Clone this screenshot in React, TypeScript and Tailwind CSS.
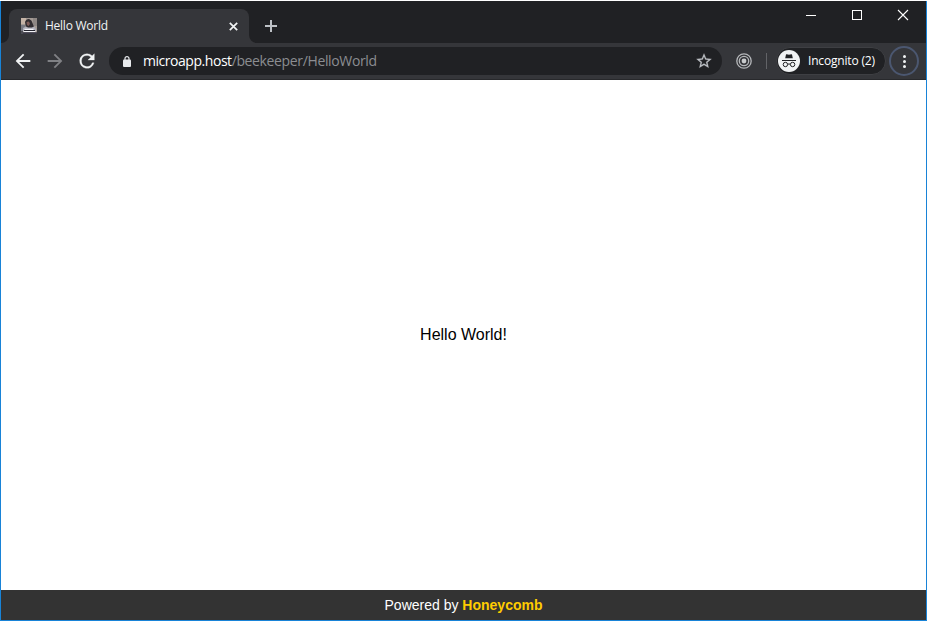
import React from 'react';

const ui = "font-['Open_Sans','Noto_Sans',sans-serif]";

function Favicon() {
  return (
    <svg className="h-4 w-4 shrink-0" viewBox="0 0 16 16">
      <rect width="16" height="16" fill="#a39a94" />
      <rect width="5" height="6" fill="#c4b3a6" />
      <rect y="7" width="4" height="6" fill="#777982" />
      <rect x="12" width="4" height="8" fill="#8e8784" />
      <path d="M4 4q1-3 4-3 3 1 3.500 4l1.500 4-2 1H5z" fill="#302c30" />
      <path d="M5.500 4l2.500-.5L9 6 7.500 8 6 7z" fill="#7d5c58" />
      <path d="M2 10l3-1.500 2 1h4l2-1 2 2.500v2H2z" fill="#b0b0ba" />
      <rect x="3.500" y="10.800" width="9" height="1.200" fill="#f4f4f8" />
      <rect x="3" y="12" width="11" height="1" fill="#24242d" />
      <rect x="2.500" y="13" width="12" height="1.200" fill="#f4f4f8" />
      <rect x="1" y="14.200" width="15" height="1.800" fill="#3b3a46" />
      <rect y="13" width="2" height="3" fill="#4c4c54" />
    </svg>
  );
}

function TabStrip() {
  return (
    <div className="flex h-[42px] shrink-0 items-end bg-[#202124]">
      <svg className="h-2 w-2 shrink-0" viewBox="0 0 8 8">
        <path d="M8 0v8H0A8 8 0 0 0 8 0z" fill="#35363a" />
      </svg>
      <div className="flex h-[34px] w-[240px] shrink-0 items-center rounded-t-lg bg-[#35363a] pl-3">
        <Favicon />
        <span className={`${ui} ml-2 w-[183.500px] text-[12px] leading-4 font-medium tracking-[-0.25px] whitespace-nowrap text-[#f1f3f4]`}>
          Hello World
        </span>
        <svg className="h-[9px] w-[9px] shrink-0" viewBox="0 0 9 9" stroke="#f1f3f4" strokeWidth="1.7">
          <path d="M.8.8l7.400 7.400M8.200.8L.8 8.200" />
        </svg>
      </div>
      <svg className="h-2 w-2 shrink-0" viewBox="0 0 8 8">
        <path d="M0 0v8h8A8 8 0 0 1 0 0z" fill="#35363a" />
      </svg>
      <svg className="mb-[11px] ml-2 h-3 w-3 shrink-0" viewBox="0 0 12 12" fill="#bdc1c6">
        <path d="M5 0h2v5h5v2H7v5H5V7H0V5h5z" />
      </svg>
      <div className="ml-auto flex h-full items-start">
        <svg className="h-[29px] w-[46px]" viewBox="0 0 46 29">
          <path d="M18 14.500h10" stroke="#fff" />
        </svg>
        <svg className="h-[29px] w-[46px]" viewBox="0 0 46 29">
          <rect x="18.500" y="9.500" width="9" height="9" fill="none" stroke="#fff" />
        </svg>
        <svg className="h-[29px] w-[46px]" viewBox="0 0 46 29">
          <path d="M18 9l10 10M28 9L18 19" stroke="#fff" strokeWidth="1.1" />
        </svg>
      </div>
    </div>
  );
}

function Toolbar() {
  return (
    <div className="flex h-[37px] shrink-0 items-center border-b border-[#28292c] bg-[#35363a] pr-[7px] pl-[11px]">
      <svg className="h-[22px] w-[22px] shrink-0" viewBox="0 0 24 24" fill="#f1f3f4">
        <path d="M20 10.900H7.830l5.590-5.490L12 4l-8 8 8 8 1.410-1.410L7.830 13.100H20z" />
      </svg>
      <svg className="ml-[10px] h-[22px] w-[22px] shrink-0" viewBox="0 0 24 24" fill="#808185">
        <path d="M4 10.900h12.170l-5.590-5.490L12 4l8 8-8 8-1.410-1.410 5.580-5.490H4z" />
      </svg>
      <svg className="ml-[10px] h-[22px] w-[22px] shrink-0" viewBox="0 0 24 24" fill="#f1f3f4" stroke="#f1f3f4" strokeWidth=".3">
        <path d="M17.650 6.350A7.958 7.958 0 0 0 12 4a8 8 0 1 0 7.730 10h-2.080A6 6 0 1 1 12 6c1.660 0 3.140.69 4.220 1.780L13 11h7V4z" />
      </svg>

      <div className="ml-[11px] flex h-7 w-[613px] shrink-0 items-center rounded-full bg-[#202124] pl-[14px]">
        <svg className="h-[11px] w-2 shrink-0" viewBox="0 0 8 11">
          <path d="M2 5V2.600a2 2 0 0 1 4 0V5" fill="none" stroke="#e8eaed" strokeWidth="1.2" />
          <rect y="3.500" width="8" height="7.500" rx="1" fill="#e8eaed" />
        </svg>
        <span className={`${ui} ml-3 w-[552px] text-[14px] leading-5 whitespace-nowrap text-[#8b8d91]`}>
          <span className="font-medium tracking-[-0.46px] text-white">microapp.host</span>
          <span className="tracking-[-0.36px]">/beekeeper/HelloWorld</span>
        </span>
        <svg className="h-[18px] w-[18px] shrink-0" viewBox="0 0 24 24" fill="#bdc1c6" stroke="#bdc1c6" strokeWidth=".3">
          <path d="M22 9.240l-7.190-.62L12 2 9.190 8.630 2 9.240l5.460 4.730L5.820 21 12 17.270 18.180 21l-1.630-7.030zM12 15.400l-3.760 2.270 1-4.280-3.320-2.880 4.380-.38L12 6.100l1.710 4.040 4.380.38-3.320 2.880 1 4.280z" />
        </svg>
      </div>

      <svg className="ml-[14px] h-4 w-4 shrink-0" viewBox="0 0 16 16" fill="none" stroke="#b5b7ba" strokeWidth="1.3">
        <circle cx="8" cy="8" r="7.2" />
        <circle cx="8" cy="8" r="4.7" />
        <circle cx="8" cy="8" r="2.4" fill="#c8cacc" stroke="none" />
      </svg>
      <div className="ml-[14px] h-4 w-px shrink-0 bg-[#626367]" />
      <div className="ml-[9px] flex h-7 w-[110px] shrink-0 items-center rounded-full border border-[#3e3f43] bg-[#202124] pl-px">
        <svg className="h-[22px] w-[22px] shrink-0" viewBox="0 0 22 22">
          <circle cx="11" cy="11" r="11" fill="#f1f3f4" />
          <path d="M7.200 8.300L8 4.600Q8.200 4 8.800 4.200L11 4.700l2.200-.5q.6-.2.8.4l.8 3.700z" fill="#202124" />
          <path d="M4 10.500h14" stroke="#202124" strokeWidth="1" />
          <g fill="none" stroke="#202124" strokeWidth="1">
            <circle cx="7.400" cy="14.500" r="2.200" />
            <circle cx="14.600" cy="14.500" r="2.200" />
            <path d="M9.700 14.300q1.300-.8 2.600 0" />
          </g>
        </svg>
        <span className={`${ui} ml-2 text-[12px] leading-4 font-medium tracking-[-0.18px] whitespace-nowrap text-white`}>Incognito (2)</span>
      </div>
      <div className="ml-[3px] flex h-[30px] w-[30px] shrink-0 items-center justify-center rounded-full border-2 border-[#4b5770]">
        <svg className="h-[13px] w-[3px]" viewBox="0 0 3 13" fill="#f1f3f4">
          <circle cx="1.500" cy="1.500" r="1.500" />
          <circle cx="1.500" cy="6.500" r="1.500" />
          <circle cx="1.500" cy="11.500" r="1.500" />
        </svg>
      </div>
    </div>
  );
}

export default function App() {
  return (
    <div className="flex h-[621px] w-[927px] flex-col overflow-hidden border-t border-t-white bg-white">
      <div className="flex min-h-0 flex-1 flex-col border-x border-b border-[#1883d7]">
        <TabStrip />
        <Toolbar />
        <main className="flex flex-1 items-center justify-center bg-white font-['Liberation_Sans',Arial,sans-serif] text-[16px] leading-[18px] text-black">
          Hello World!
        </main>
        <footer className="flex h-[30px] shrink-0 items-center justify-center bg-[#333333] font-['Liberation_Sans',Arial,sans-serif] text-[14px] leading-4 text-white">
          <span className="whitespace-pre">Powered by </span>
          <span className="font-bold text-[#ffcc00]">Honeycomb</span>
        </footer>
      </div>
    </div>
  );
}
